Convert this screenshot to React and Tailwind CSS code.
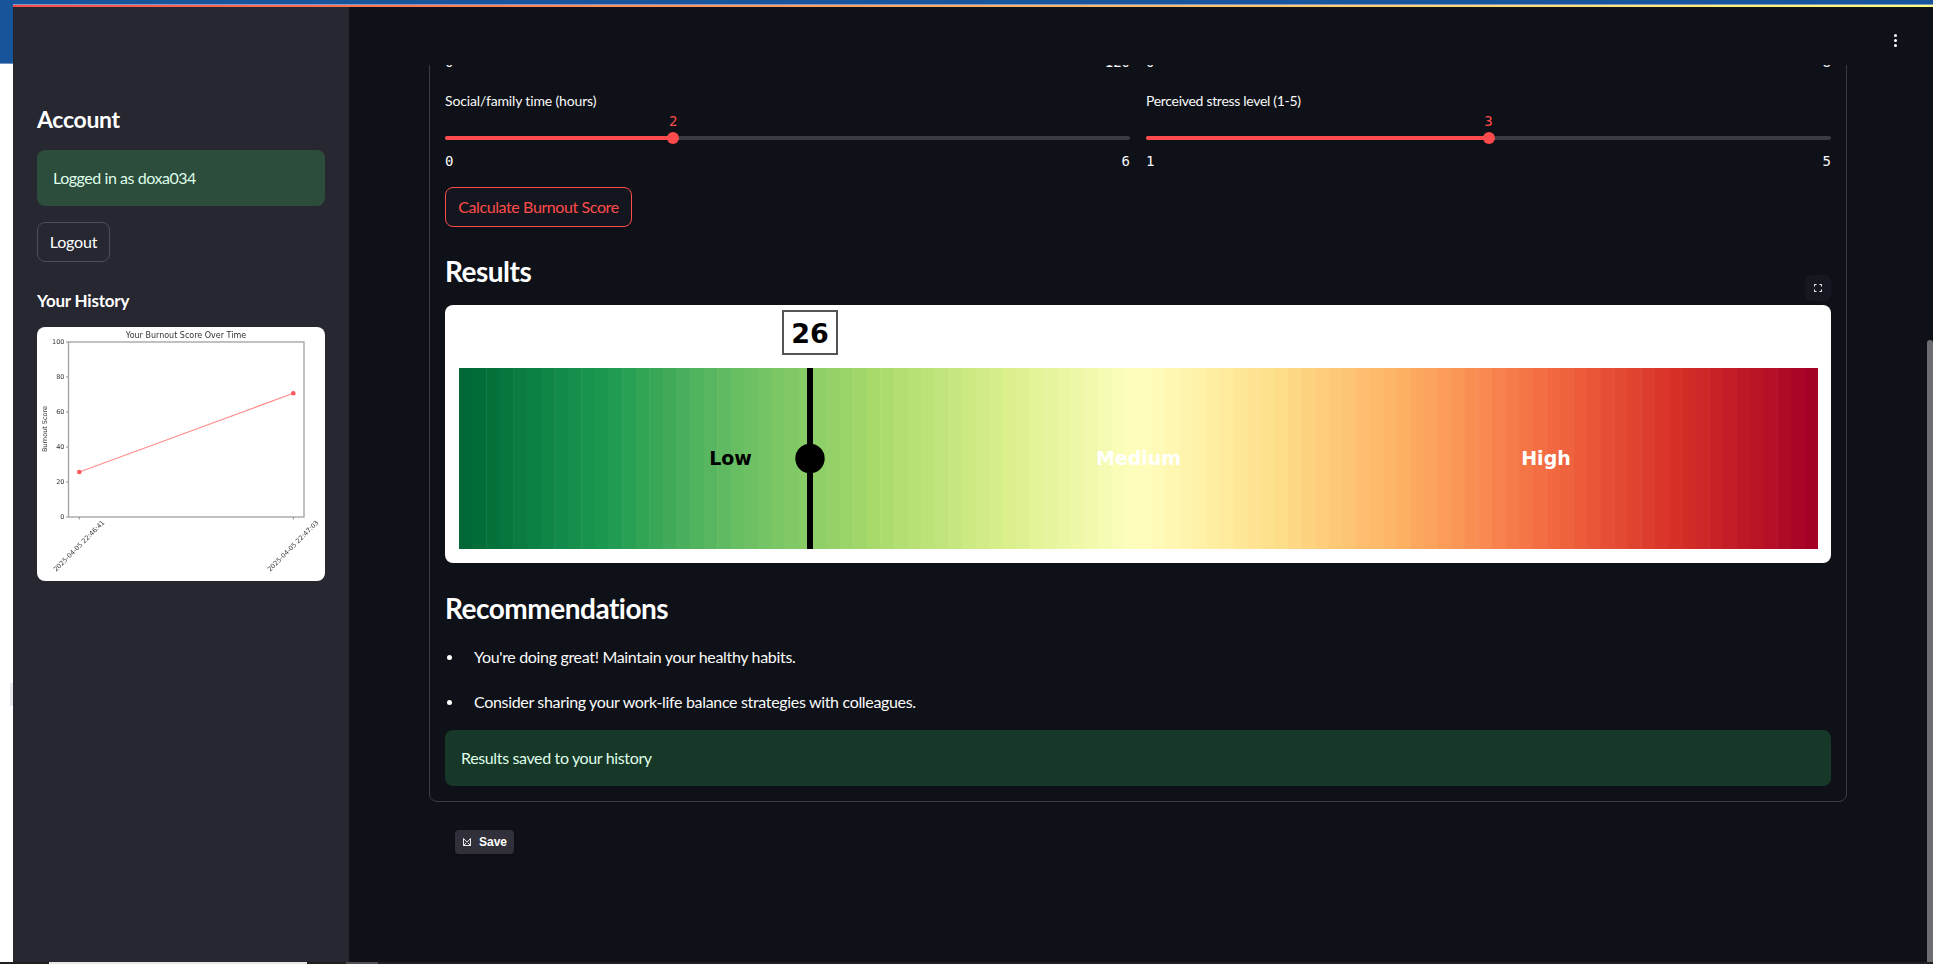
import React from "react";

const anchors = ["006837","1a9850","66bd63","a6d96a","d9ef8b","ffffbf","fee08b","fdae61","f46d43","d73027","a50026"].map((h) => [0, 2, 4].map((i) => parseInt(h.slice(i, i + 2), 16)));
const colorAt = (t) => {
  const p = t * 10;
  const i = Math.min(9, Math.floor(p));
  const f = p - i;
  const c = anchors[i].map((v, k) => Math.round(v + (anchors[i + 1][k] - v) * f));
  return `rgb(${c[0]},${c[1]},${c[2]})`;
};

function BurnoutGauge() {
  const x0 = 14, y0 = 63, w = 1359, h = 181, n = 100;
  const bw = w / n;
  const font = "'DejaVu Sans', sans-serif";
  return (
    <svg width="1386" height="258" viewBox="0 0 1386 258" className="block">
      {Array.from({ length: n }, (_, i) => (
        <rect key={i} x={x0 + i * bw} y={y0} width={i === n - 1 ? bw : bw + 0.5} height={h} fill={colorAt(i / (n - 1))} />
      ))}
      <text x="285.5" y="159.5" fontFamily={font} fontWeight="700" fontSize="19" textAnchor="middle" fill="#000">Low</text>
      <text x="693.5" y="159.5" fontFamily={font} fontWeight="700" fontSize="19" textAnchor="middle" fill="#fff">Medium</text>
      <text x="1101" y="159.5" fontFamily={font} fontWeight="700" fontSize="19" textAnchor="middle" fill="#fff">High</text>
      <rect x="362" y="63" width="6" height="181" fill="#000" />
      <circle cx="365" cy="153.5" r="14.7" fill="#000" />
      <rect x="338" y="6" width="54" height="43" fill="#fff" stroke="#555" strokeWidth="2" />
      <text x="365" y="37.5" fontFamily={font} fontWeight="700" fontSize="27" textAnchor="middle" fill="#000">26</text>
    </svg>
  );
}

function HistoryChart() {
  const font = "'DejaVu Sans', sans-serif";
  const ticks = [[100, 15], [80, 50], [60, 85], [40, 120], [20, 155], [0, 190]];
  return (
    <svg width="288" height="254" viewBox="0 0 288 254" className="block blur-[0.35px]">
      <text x="149" y="11" fontFamily={font} fontSize="8" textAnchor="middle" fill="#333">Your Burnout Score Over Time</text>
      <rect x="31.5" y="15" width="235.5" height="175" fill="none" stroke="#a0a0a0" strokeWidth="1.3" />
      {ticks.map(([v, y]) => (
        <g key={v}>
          <line x1="29" x2="31" y1={y} y2={y} stroke="#666" strokeWidth="0.7" />
          <text x="27.5" y={y + 2.4} fontFamily={font} fontSize="6.5" textAnchor="end" fill="#333">{v}</text>
        </g>
      ))}
      <text transform="translate(9.5 102) rotate(-90)" fontFamily={font} fontSize="6.5" textAnchor="middle" fill="#333">Burnout Score</text>
      <line x1="42.3" y1="145" x2="256.3" y2="66.3" stroke="#ff8f8f" strokeWidth="1.2" />
      <circle cx="42.3" cy="145" r="2.3" fill="#ff5a5f" />
      <circle cx="256.3" cy="66.3" r="2.3" fill="#ff5a5f" />
      <line x1="42.3" x2="42.3" y1="190" y2="192.5" stroke="#666" strokeWidth="0.7" />
      <line x1="256.3" x2="256.3" y1="190" y2="192.5" stroke="#666" strokeWidth="0.7" />
      <text transform="translate(68 196) rotate(-45)" fontFamily={font} fontSize="6.5" textAnchor="end" fill="#333">2025-04-05 22:46:41</text>
      <text transform="translate(282 196) rotate(-45)" fontFamily={font} fontSize="6.5" textAnchor="end" fill="#333">2025-04-05 22:47:03</text>
    </svg>
  );
}

function Slider({ label, labelClass, value, min, max, pct }) {
  return (
    <div className="flex flex-col">
      <div className={`h-5 text-[14px] leading-5 text-[#fafafa] ${labelClass}`}>{label}</div>
      <div className="relative mt-[25px] h-1 rounded-full bg-[#3a3b42]">
        <div className="h-1 rounded-full bg-[#ff4b4b]" style={{ width: `${pct}%` }} />
        <div className="absolute top-[-4px] h-3 w-3 -translate-x-1/2 rounded-full bg-[#ff4b4b]" style={{ left: `${pct}%` }} />
        <div className="absolute top-[-25px] -translate-x-1/2 font-['DejaVu_Sans_Mono',monospace] text-[14px] leading-5 text-[#ff4b4b]" style={{ left: `${pct}%` }}>{value}</div>
      </div>
      <div className="mt-[11px] flex h-5 justify-between font-['DejaVu_Sans_Mono',monospace] text-[14px] leading-5 text-[#fafafa]">
        <span>{min}</span>
        <span>{max}</span>
      </div>
    </div>
  );
}

export default function App() {
  return (
    <div className="flex h-[964px] w-[1933px] flex-col overflow-hidden bg-white font-['Lato',sans-serif] text-[#fafafa]">
      <div className="h-1 w-full shrink-0 bg-[#17549b]" />
      <div className="flex min-h-0 flex-1">
        <div className="flex w-[13px] shrink-0 flex-col">
          <div className="h-[60px] border-b border-[#6f93c0] bg-[#17549b]" />
          <div className="ml-[10px] mt-[619px] h-[23px] w-[3px] bg-[#e8e8ee]" />
        </div>
        <div className="flex min-w-0 flex-1 flex-col">
          <div className="h-px bg-[#7d9cc4]" />
          <div className="h-[2px] bg-gradient-to-r from-[#ff4b4b] to-[#fffd80]" />
          <div className="flex min-h-0 flex-1">
            <aside className="flex w-[336px] shrink-0 flex-col bg-[#262730] px-6 pt-[95px]">
              <h2 className="h-[34px] text-[23px] font-bold leading-[34px] tracking-[-0.3px] text-white">Account</h2>
              <div className="mt-[14px] flex h-14 items-center rounded-lg bg-[#2c4c3c] px-4 text-[16px] tracking-[-0.45px] text-[#dffde9]">Logged in as doxa034</div>
              <button className="mt-4 h-10 w-[73px] rounded-lg border border-[#4d4f58] bg-[#262730] text-[16px] tracking-[-0.2px] text-white">Logout</button>
              <h3 className="mt-[25px] h-7 text-[17px] font-bold leading-7 tracking-[-0.2px] text-white">Your History</h3>
              <div className="mt-3 overflow-hidden rounded-lg bg-white">
                <HistoryChart />
              </div>
            </aside>
            <main className="relative flex min-w-0 flex-1 flex-col bg-[#0e1117]">
              <div className="flex h-[58px] shrink-0 justify-end pr-[36px] pt-[27px]">
                <div className="flex flex-col gap-[2px]">
                  <span className="h-[3px] w-[3px] rounded-full bg-white" />
                  <span className="h-[3px] w-[3px] rounded-full bg-white" />
                  <span className="h-[3px] w-[3px] rounded-full bg-white" />
                </div>
              </div>
              <div className="min-h-0 flex-1 overflow-hidden pl-[80px]">
                <div className="-mt-[14px] w-[1418px] rounded-lg border border-[#3a3d42] px-[15px] pb-[15px]">
                  <div className="grid grid-cols-2 gap-4">
                    <div className="flex h-[20px] justify-between font-['DejaVu_Sans_Mono',monospace] text-[14px] leading-5"><span>0</span><span>120</span></div>
                    <div className="flex h-[20px] justify-between font-['DejaVu_Sans_Mono',monospace] text-[14px] leading-5"><span>0</span><span>8</span></div>
                  </div>
                  <div className="mt-[19px] grid grid-cols-2 gap-4">
                    <Slider label="Social/family time (hours)" labelClass="tracking-[-0.15px]" value="2" min="0" max="6" pct={33.33} />
                    <Slider label="Perceived stress level (1-5)" labelClass="tracking-[-0.3px]" value="3" min="1" max="5" pct={50} />
                  </div>
                  <button className="mt-4 h-10 w-[187px] rounded-lg border border-[#ff4b4b] bg-[#13161e] text-[16px] tracking-[-0.4px] text-[#ff4b4b]">Calculate Burnout Score</button>
                  <h2 className="mt-[26px] h-9 text-[28px] font-bold leading-9 tracking-[-0.5px] text-white">Results</h2>
                  <div className="relative mt-4">
                    <button className="absolute right-0 top-[-30px] flex h-[26px] w-[26px] items-center justify-center rounded-md bg-[#151820]" aria-label="Fullscreen">
                      <svg width="8" height="8" viewBox="0 0 8 8" fill="none" stroke="#fafafa" strokeWidth="1">
                        <path d="M.5 2.5v-2h2M5.5.5h2v2M7.5 5.5v2h-2M2.5 7.5h-2v-2" />
                      </svg>
                    </button>
                    <div className="overflow-hidden rounded-lg bg-white">
                      <BurnoutGauge />
                    </div>
                  </div>
                  <h2 className="mt-[27px] h-9 text-[28px] font-bold leading-9 tracking-[-0.5px] text-white">Recommendations</h2>
                  <ul className="mt-[19px] flex flex-col gap-[21px] text-[16px] leading-6 tracking-[-0.33px] text-[#fafafa]">
                    <li className="flex h-6 items-center"><span className="ml-[2px] mr-[22px] h-[5px] w-[5px] rounded-full bg-white" />You're doing great! Maintain your healthy habits.</li>
                    <li className="flex h-6 items-center"><span className="ml-[2px] mr-[22px] h-[5px] w-[5px] rounded-full bg-white" />Consider sharing your work-life balance strategies with colleagues.</li>
                  </ul>
                  <div className="mt-4 flex h-14 items-center rounded-lg bg-[#173828] px-4 text-[16px] tracking-[-0.36px] text-[#dffde9]">Results saved to your history</div>
                </div>
                <div className="ml-[26px] mt-7 flex h-6 w-[59px] items-center gap-2 rounded bg-[#31303a] pl-2 font-['Liberation_Sans',sans-serif] text-[12px] font-bold text-white shadow-sm">
                  <svg width="8" height="8" viewBox="0 0 8 8" fill="none" stroke="#fff" strokeWidth="0.9" className="shrink-0">
                    <path d="M.5.5v7h7v-7L4 4.2.5.5M.5 7.5l2.6-2.6M7.5 7.5 4.9 4.9" />
                  </svg>
                  <span>Save</span>
                </div>
              </div>
              <div className="absolute bottom-0 right-0 top-[333px] w-[6px] rounded-t-full bg-[#6b6b70]" />
            </main>
          </div>
        </div>
      </div>
      <div className="flex h-[2px] w-full shrink-0 bg-[#1f1f1f]">
        <div className="ml-[49px] w-[258px] bg-[#e6e6e6]" />
        <div className="ml-[39px] w-[32px] bg-[#505050]" />
      </div>
    </div>
  );
}
